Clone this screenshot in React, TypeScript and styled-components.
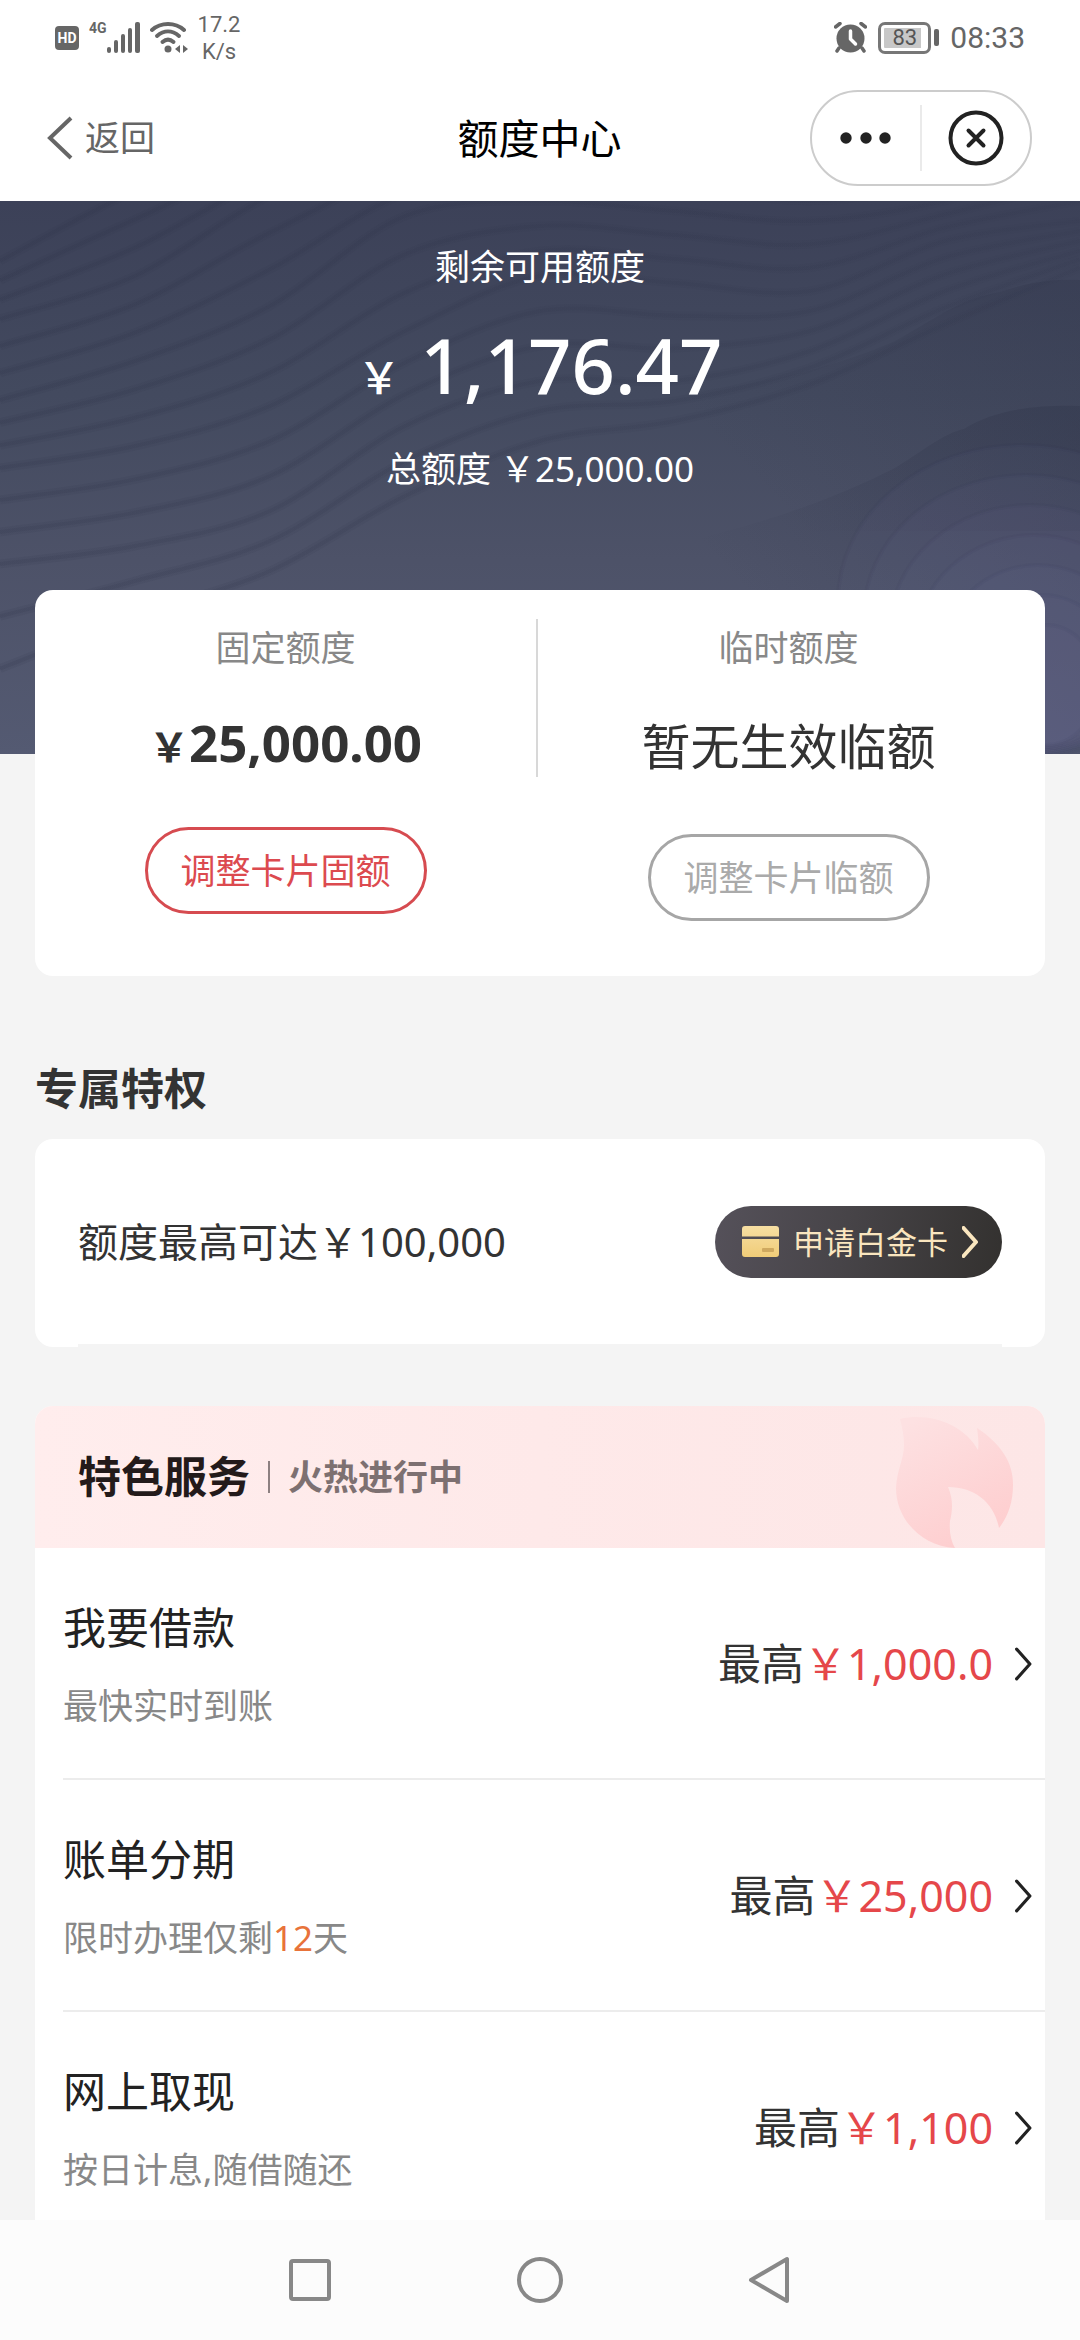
import React from "react";
import styled, { createGlobalStyle, css } from "styled-components";

const GlobalStyle = createGlobalStyle`
  *, *::before, *::after { box-sizing: border-box; }
  html, body { margin: 0; padding: 0; }
  body {
    background: #f4f4f4;
    color: #333;
    font-family: "Noto Sans", "Noto Sans CJK SC", sans-serif;
  }
  h1, h2, h3, p, ul { margin: 0; padding: 0; font-weight: 400; }
  button { font-family: inherit; cursor: pointer; }
`;

const Screen = styled.div`
  display: flex;
  flex-direction: column;
  height: 100vh;
  background: #f4f4f4;
`;

/* ---------- status bar ---------- */

const Top = styled.header`
  flex: none;
  background: #fff;
`;

const StatusBar = styled.div`
  display: flex;
  justify-content: space-between;
  align-items: center;
  height: 75px;
  padding: 0 55px;
  color: #666;
  font-family: Roboto, "Noto Sans", sans-serif;
`;

const StatusGroup = styled.div<{ $gap: number }>`
  display: flex;
  align-items: center;
  gap: ${(p) => p.$gap}px;
`;

const HdBadge = styled.span`
  width: 24px;
  height: 24px;
  border-radius: 4px;
  background: #666;
  color: #fff;
  font-size: 14px;
  font-weight: 700;
  line-height: 24px;
  text-align: center;
`;

const Network = styled.span`
  display: flex;
  align-items: flex-start;
  font-size: 14px;
  font-weight: 700;
  line-height: 12px;
`;

const Speed = styled.span`
  font-size: 22px;
  line-height: 27px;
  text-align: center;
`;

const Battery = styled.span`
  display: flex;
  align-items: center;
  gap: 3px;

  &::after {
    content: "";
    width: 5px;
    height: 17px;
    border-radius: 2px;
    background: #666;
  }
`;

const BatteryLevel = styled.span`
  width: 53px;
  height: 32px;
  padding: 3px;
  border: 3px solid #777;
  border-radius: 7px;
  background: linear-gradient(90deg, #c8c8c8 90%, transparent 90%) content-box;
  color: #555;
  font-size: 22px;
  line-height: 20px;
  text-align: center;
`;

const Clock = styled.span`
  font-size: 30px;
  line-height: 36px;
`;

/* ---------- title bar ---------- */

const TitleBar = styled.div`
  display: grid;
  grid-template-columns: 1fr auto 1fr;
  align-items: center;
  height: 126px;
  padding: 0 48px 0 47px;
`;

const BackButton = styled.button`
  display: flex;
  align-items: center;
  justify-self: start;
  gap: 12px;
  padding: 0;
  border: 0;
  background: none;
  color: #666;
  font-size: 35px;
  line-height: 48px;
`;

const PageTitle = styled.h1`
  color: #000;
  font-size: 41px;
  line-height: 60px;
`;

const Capsule = styled.div`
  display: flex;
  align-items: center;
  justify-self: end;
  width: 222px;
  height: 96px;
  border: 2px solid #ccc;
  border-radius: 48px;
`;

const CapsuleButton = styled.button`
  display: flex;
  flex: 1;
  align-items: center;
  justify-content: center;
  height: 66px;
  padding: 0;
  border: 0;
  background: none;

  & + & { border-left: 2px solid #eaeaea; }
`;

/* ---------- scrolling content ---------- */

const Content = styled.main`
  flex: 1;
  min-height: 0;
  overflow-y: auto;
  scrollbar-width: none;
`;

const Hero = styled.section`
  position: relative;
  padding: 42px 0 261px;
  background: linear-gradient(180deg, #3c4158 0%, #434a5f 35%, #4d5268 65%, #545a72 100%);
  color: #fff;
  text-align: center;
`;

const Waves = styled.svg`
  position: absolute;
  inset: 0;
  width: 100%;
  height: 100%;
`;

const HeroText = styled.div`
  position: relative;
  display: flex;
  flex-direction: column;
`;

const HeroLine = styled.p`
  font-size: 35px;
  line-height: 48px;
`;

const HeroAmount = styled.p`
  margin: 24px 0 30px;
  font-size: 76px;
  font-weight: 500;
  line-height: 100px;
`;

const HeroCurrency = styled.span`
  font-size: 43px;
  line-height: 1;
`;

const Card = styled.section`
  margin: 0 35px;
  border-radius: 18px;
  background: #fff;
`;

const LimitCard = styled(Card)`
  position: relative;
  display: grid;
  grid-template-columns: 1fr 2px 1fr;
  margin-top: -164px;
  padding: 29px 6px 55px 0;
`;

const LimitDivider = styled.div`
  height: 158px;
  background: #d8d8d8;
`;

const LimitColumn = styled.div`
  display: flex;
  flex-direction: column;
  align-items: center;
  padding-top: 5px;
`;

const LimitLabel = styled.h2`
  margin-bottom: 36px;
  color: #888;
  font-size: 35px;
  line-height: 48px;
`;

const LimitValue = styled.p<{ $bold?: boolean }>`
  margin-bottom: 50px;
  color: #333;
  font-size: 49px;
  line-height: 76px;
  ${(p) =>
    p.$bold &&
    css`
      font-size: 51px;
      font-weight: 700;
      line-height: 69px;
    `}
`;

const LimitCurrency = styled.span`
  font-size: 40px;
  line-height: 1;
`;

const OutlineButton = styled.button<{ $color: string; $line: string }>`
  width: 282px;
  height: 87px;
  padding: 0;
  border: 3px solid ${(p) => p.$line};
  border-radius: 44px;
  background: none;
  color: ${(p) => p.$color};
  font-size: 35px;
  line-height: 48px;
`;

const SectionTitle = styled.h2`
  margin: 83px 35px 20px;
  color: #333;
  font-size: 43px;
  font-weight: 700;
  line-height: 60px;
`;

const PerkCard = styled(Card)`
  padding: 0 43px;
`;

const PerkRow = styled.div`
  display: flex;
  align-items: center;
  justify-content: space-between;
  height: 208px;
  border-bottom: 3px solid #f4f4f4;
`;

const PerkText = styled.p`
  color: #333;
  font-size: 40px;
  line-height: 60px;
`;

const PlatinumButton = styled.button`
  display: flex;
  align-items: center;
  gap: 14px;
  height: 72px;
  padding: 0 24px 0 27px;
  border: 0;
  border-radius: 36px;
  background: linear-gradient(100deg, #55515a 0%, #474448 45%, #33312f 100%);
  color: #fae6bf;
  font-size: 31px;
  line-height: 48px;
`;

const ServiceCard = styled(Card)`
  margin-top: 59px;
  overflow: hidden;
`;

const ServiceHead = styled.div`
  display: flex;
  align-items: center;
  height: 142px;
  padding: 0 31px 0 43px;
  background: linear-gradient(90deg, #ffeded 0%, #fee9e9 50%, #fde6e6 100%);
`;

const ServiceTitle = styled.h2`
  color: #231a1a;
  font-size: 43px;
  font-weight: 700;
  line-height: 60px;
`;

const ServiceTag = styled.p`
  display: flex;
  align-items: center;
  gap: 18px;
  margin-left: 18px;
  color: #7d7071;
  font-size: 35px;
  font-weight: 700;
  line-height: 48px;

  &::before {
    content: "";
    width: 2px;
    height: 32px;
    background: #8d8081;
  }
`;

const Flame = styled.svg`
  align-self: flex-end;
  margin-left: auto;
`;

const ServiceList = styled.ul`
  padding-left: 28px;
  list-style: none;
`;

const ServiceItem = styled.li`
  border-bottom: 2px solid #ececec;
`;

const ServiceLink = styled.a`
  display: flex;
  align-items: center;
  justify-content: space-between;
  padding: 50px 13px 48px 0;
  color: #222;
  text-decoration: none;
`;

const ServiceName = styled.h3`
  margin-bottom: 24px;
  font-size: 43px;
  line-height: 60px;
`;

const ServiceNote = styled.p`
  color: #888;
  font-size: 35px;
  line-height: 48px;

  em {
    color: #e8733a;
    font-style: normal;
  }
`;

const ServiceLimit = styled.p`
  display: flex;
  align-items: center;
  gap: 22px;
  color: #333;
  font-size: 43px;
  line-height: 60px;

  strong {
    color: #e5474a;
    font-weight: 400;
  }
`;

/* ---------- system navigation ---------- */

const SystemNav = styled.nav`
  display: flex;
  flex: none;
  align-items: center;
  justify-content: center;
  gap: 180px;
  height: 120px;
  background: #fcfcfc;
`;

const SystemButton = styled.button`
  display: flex;
  padding: 0;
  border: 0;
  background: none;
`;

/* ---------- drawings ---------- */

const WAVE_X = [0, 135, 270, 405, 540, 675, 810, 945, 1080];
const WAVE_KEYS = [
  [60, -10, -60, -90, -100, -100, -80, -90, -100],
  [118, 75, -5, -50, -60, -60, -40, -50, -80],
  [199, 160, 105, 15, 0, 10, 20, 0, -40],
  [267, 245, 205, 130, 75, 82, 90, 40, 20],
  [363, 345, 310, 225, 180, 180, 150, 90, 50],
  [520, 450, 400, 330, 270, 240, 200, 140, 75],
];
const STEPS = 3;

function smoothPath(ys: number[]) {
  const pts = WAVE_X.map((x, i) => [x, ys[i]]);
  let d = `M${pts[0][0]} ${pts[0][1]}`;
  for (let i = 0; i < pts.length - 1; i++) {
    const p0 = pts[Math.max(i - 1, 0)];
    const p1 = pts[i];
    const p2 = pts[i + 1];
    const p3 = pts[Math.min(i + 2, pts.length - 1)];
    d += ` C${p1[0] + (p2[0] - p0[0]) / 6} ${p1[1] + (p2[1] - p0[1]) / 6} ${
      p2[0] - (p3[0] - p1[0]) / 6
    } ${p2[1] - (p3[1] - p1[1]) / 6} ${p2[0]} ${p2[1]}`;
  }
  return d;
}

const waveLines: string[] = [];
for (let k = 0; k < WAVE_KEYS.length - 1; k++) {
  for (let s = 0; s < STEPS; s++) {
    const t = s / STEPS;
    waveLines.push(smoothPath(WAVE_KEYS[k].map((y, i) => y + (WAVE_KEYS[k + 1][i] - y) * t)));
  }
}

function HeroWaves() {
  return (
    <Waves viewBox="0 0 1080 553" preserveAspectRatio="none" aria-hidden="true">
      <defs>
        <linearGradient id="ridgeUpper" gradientUnits="userSpaceOnUse" x1="1060" y1="80" x2="800" y2="330">
          <stop offset="0" stopColor="#2f3449" stopOpacity="0.3" />
          <stop offset="1" stopColor="#2f3449" stopOpacity="0" />
        </linearGradient>
        <linearGradient id="ridgeLower" gradientUnits="userSpaceOnUse" x1="1060" y1="205" x2="800" y2="450">
          <stop offset="0" stopColor="#2f3449" stopOpacity="0.36" />
          <stop offset="1" stopColor="#2f3449" stopOpacity="0" />
        </linearGradient>
        <linearGradient id="lineFade" gradientUnits="userSpaceOnUse" x1="0" y1="0" x2="1080" y2="0">
          <stop offset="0" stopColor="#2b3046" stopOpacity="0.24" />
          <stop offset="0.6" stopColor="#2b3046" stopOpacity="0.18" />
          <stop offset="1" stopColor="#2b3046" stopOpacity="0.12" />
        </linearGradient>
      </defs>
      <g fill="none" stroke="url(#lineFade)">
        {waveLines.map((d) => (
          <React.Fragment key={d}>
            <path d={d} strokeWidth="9" strokeOpacity="0.45" />
            <path d={d} strokeWidth="4" strokeOpacity="0.6" />
          </React.Fragment>
        ))}
      </g>
      <path
        d="M690 188 C740 190 840 165 895 140 C945 112 960 98 1000 91 C1030 80 1060 78 1080 79 V330 H690Z"
        fill="url(#ridgeUpper)"
      />
      <path
        d="M585 357 C690 345 800 315 895 267 C930 245 945 232 964 228 C1000 205 1050 204 1080 205 V553 H585Z"
        fill="url(#ridgeLower)"
      />
      <g fill="#70789c" fillOpacity="0.07" stroke="#2b3046" strokeOpacity="0.05" strokeWidth="4">
        {[0, 1, 2, 3, 4, 5, 6].map((i) => (
          <ellipse key={i} cx={1022 + i * 4} cy={400 + i * 14} rx={184 - i * 22} ry={156 - i * 16} />
        ))}
      </g>
    </Waves>
  );
}

function Chevron({ color, size, width }: { color: string; size: number; width: number }) {
  return (
    <svg width={size} height={size * 2} viewBox="0 0 16 32" fill="none" aria-hidden="true">
      <path d="M1.500 2 L14 16 L1.500 30" stroke={color} strokeWidth={width} strokeLinecap="round" strokeLinejoin="round" />
    </svg>
  );
}

function SignalIcon() {
  return (
    <svg width="33" height="31" viewBox="0 0 33 31" fill="#666" aria-hidden="true">
      <rect x="0" y="25" width="4" height="6" rx="2" />
      <rect x="7" y="18" width="4" height="13" rx="2" />
      <rect x="14" y="12" width="4" height="19" rx="2" />
      <rect x="21" y="6" width="4" height="25" rx="2" />
      <rect x="28" y="0" width="5" height="31" rx="2" />
    </svg>
  );
}

function WifiIcon() {
  return (
    <svg width="38" height="31" viewBox="0 0 38 31" fill="none" aria-hidden="true">
      <g stroke="#666" strokeWidth="4" strokeLinecap="round">
        <path d="M2 8 C11 0 25 0 34 8" />
        <path d="M7 14 C14 8 22 8 29 14" />
        <path d="M12.500 20 C16 17 20 17 23.500 20" />
      </g>
      <circle cx="18" cy="27" r="3.500" fill="#666" />
      <path d="M30 23 V31 L25 27Z M33 23 V31 L38 27Z" fill="#666" />
    </svg>
  );
}

function AlarmIcon() {
  return (
    <svg width="33" height="31" viewBox="0 0 33 31" fill="none" aria-hidden="true">
      <circle cx="16.500" cy="16.500" r="14" fill="#666" />
      <path d="M1.500 5 L6 1.500 M31.500 5 L27 1.500 M5 26 L3 29 M28 26 L30 29" stroke="#666" strokeWidth="3.500" strokeLinecap="round" />
      <path d="M16.500 9 V17 L21.500 22" stroke="#fff" strokeWidth="3.500" strokeLinecap="round" strokeLinejoin="round" />
    </svg>
  );
}

function CardIcon() {
  return (
    <svg width="37" height="32" viewBox="0 0 37 32" aria-hidden="true">
      <defs>
        <linearGradient id="gold" x1="0" y1="0" x2="0" y2="1">
          <stop offset="0" stopColor="#f7dfa3" />
          <stop offset="1" stopColor="#f0cc78" />
        </linearGradient>
      </defs>
      <path d="M3 0 H34 Q37 0 37 3 V10.500 H0 V3 Q0 0 3 0Z M0 13 H37 V28 Q37 31 34 31 H3 Q0 31 0 28Z" fill="url(#gold)" />
      <rect x="20" y="22" width="12" height="4" rx="1" fill="#cfa95f" />
    </svg>
  );
}

/* ---------- data ---------- */

type Service = { name: string; note: React.ReactNode; limit: string };

const services: Service[] = [
  { name: "我要借款", note: "最快实时到账", limit: "1,000.0" },
  {
    name: "账单分期",
    note: (
      <>
        限时办理仅剩<em>12</em>天
      </>
    ),
    limit: "25,000",
  },
  { name: "网上取现", note: "按日计息,随借随还", limit: "1,100" },
];

export default function App() {
  return (
    <Screen lang="zh-CN">
      <GlobalStyle />
      <Top>
        <StatusBar>
          <StatusGroup $gap={10}>
            <HdBadge>HD</HdBadge>
            <Network>
              4G
              <SignalIcon />
            </Network>
            <WifiIcon />
            <Speed>
              17.2
              <br />
              K/s
            </Speed>
          </StatusGroup>
          <StatusGroup $gap={11}>
            <AlarmIcon />
            <Battery>
              <BatteryLevel>83</BatteryLevel>
            </Battery>
            <Clock>08:33</Clock>
          </StatusGroup>
        </StatusBar>
        <TitleBar>
          <BackButton type="button">
            <svg width="26" height="44" viewBox="0 0 26 44" fill="none" aria-hidden="true">
              <path d="M24 2 L3 22 L24 42" stroke="#666" strokeWidth="4" />
            </svg>
            返回
          </BackButton>
          <PageTitle>额度中心</PageTitle>
          <Capsule>
            <CapsuleButton type="button" aria-label="更多">
              <svg width="52" height="12" viewBox="0 0 52 12" fill="#222" aria-hidden="true">
                <circle cx="6" cy="6" r="5.700" />
                <circle cx="26" cy="6" r="5.700" />
                <circle cx="45" cy="6" r="5.700" />
              </svg>
            </CapsuleButton>
            <CapsuleButton type="button" aria-label="关闭">
              <svg width="56" height="56" viewBox="0 0 56 56" fill="none" stroke="#222" strokeWidth="4" aria-hidden="true">
                <circle cx="28" cy="28" r="25.500" />
                <path d="M20.500 20.500 L35.500 35.500 M35.500 20.500 L20.500 35.500" strokeLinecap="round" />
              </svg>
            </CapsuleButton>
          </Capsule>
        </TitleBar>
      </Top>

      <Content>
        <Hero>
          <HeroWaves />
          <HeroText>
            <HeroLine>剩余可用额度</HeroLine>
            <HeroAmount>
              <HeroCurrency>￥</HeroCurrency> 1,176.47
            </HeroAmount>
            <HeroLine>总额度 ￥25,000.00</HeroLine>
          </HeroText>
        </Hero>

        <LimitCard>
          <LimitColumn>
            <LimitLabel>固定额度</LimitLabel>
            <LimitValue $bold>
              <LimitCurrency>￥</LimitCurrency>25,000.00
            </LimitValue>
            <OutlineButton type="button" $color="#dc4a4f" $line="#d64b50">
              调整卡片固额
            </OutlineButton>
          </LimitColumn>
          <LimitDivider />
          <LimitColumn>
            <LimitLabel>临时额度</LimitLabel>
            <LimitValue>暂无生效临额</LimitValue>
            <OutlineButton type="button" $color="#aaa" $line="#a6a6a6">
              调整卡片临额
            </OutlineButton>
          </LimitColumn>
        </LimitCard>

        <SectionTitle>专属特权</SectionTitle>
        <PerkCard>
          <PerkRow>
            <PerkText>额度最高可达￥100,000</PerkText>
            <PlatinumButton type="button">
              <CardIcon />
              申请白金卡
              <Chevron color="#fae6bf" size={16} width={4} />
            </PlatinumButton>
          </PerkRow>
        </PerkCard>

        <ServiceCard>
          <ServiceHead>
            <ServiceTitle>特色服务</ServiceTitle>
            <ServiceTag>火热进行中</ServiceTag>
            <Flame width="118" height="131" viewBox="0 0 118 131" aria-hidden="true">
              <defs>
                <linearGradient id="flame" x1="0.200" y1="0" x2="0.700" y2="1">
                  <stop offset="0" stopColor="#fde1e2" />
                  <stop offset="1" stopColor="#fecdce" />
                </linearGradient>
              </defs>
              <path
                d="M4 2 C35 -5 68 8 82 33 C83 26 82 18 81 11 C105 27 117 45 117 68 C117 85 112 100 103 111 C98 85 78 70 52 70 C58 84 56 95 54 104 C53 115 55 124 59 131 C25 129 0 102 0 71 C1 52 8 42 8 28 C8 18 6 10 4 2Z"
                fill="url(#flame)"
              />
            </Flame>
          </ServiceHead>
          <ServiceList>
            {services.map((s) => (
              <ServiceItem key={s.name}>
                <ServiceLink href="#">
                  <div>
                    <ServiceName>{s.name}</ServiceName>
                    <ServiceNote>{s.note}</ServiceNote>
                  </div>
                  <ServiceLimit>
                    <span>
                      最高<strong>￥{s.limit}</strong>
                    </span>
                    <Chevron color="#222" size={17} width={3} />
                  </ServiceLimit>
                </ServiceLink>
              </ServiceItem>
            ))}
          </ServiceList>
        </ServiceCard>
      </Content>

      <SystemNav>
        <SystemButton type="button" aria-label="最近任务">
          <svg width="50" height="50" viewBox="0 0 50 50" fill="none" aria-hidden="true">
            <rect x="6" y="6" width="38" height="38" rx="2" stroke="#888" strokeWidth="4" />
          </svg>
        </SystemButton>
        <SystemButton type="button" aria-label="主屏幕">
          <svg width="50" height="50" viewBox="0 0 50 50" fill="none" aria-hidden="true">
            <circle cx="25" cy="25" r="21" stroke="#888" strokeWidth="4" />
          </svg>
        </SystemButton>
        <SystemButton type="button" aria-label="返回上一级">
          <svg width="50" height="50" viewBox="0 0 50 50" fill="none" aria-hidden="true">
            <path d="M42 4 V46 L6 25Z" stroke="#888" strokeWidth="4" strokeLinejoin="round" />
          </svg>
        </SystemButton>
      </SystemNav>
    </Screen>
  );
}
